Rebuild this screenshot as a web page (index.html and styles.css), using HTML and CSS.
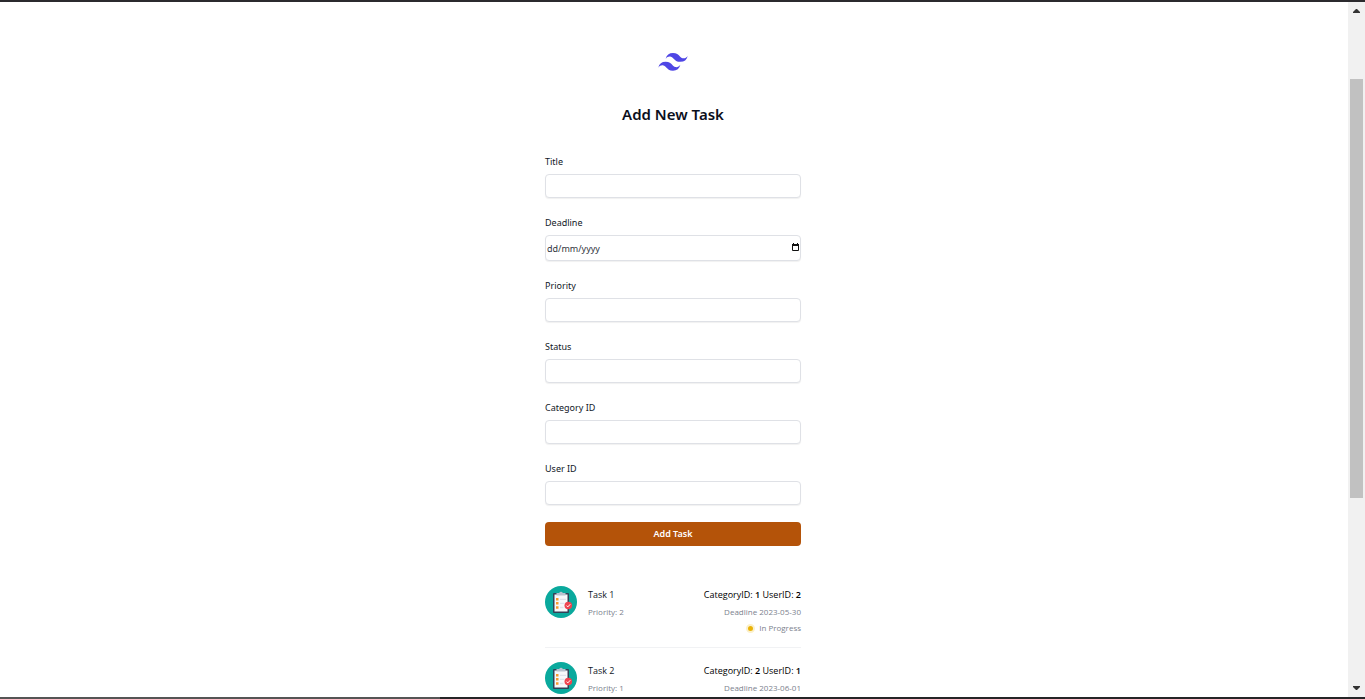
FILE: index.html
```
<!DOCTYPE html>
<html lang="en">
<head>
<meta charset="utf-8">
<title>Add New Task</title>
<link rel="stylesheet" href="styles.css">
</head>
<body>
<svg width="0" height="0" class="defs" aria-hidden="true">
  <symbol id="clipboard" viewBox="0 0 32 32">
    <circle cx="16" cy="16" r="16" fill="#0aa99d"/>
    <rect x="8" y="7" width="16" height="20" rx="1" fill="#324056"/>
    <rect x="9.500" y="8.500" width="13" height="17" fill="#f7f8fb"/>
    <path d="M11.500 9.500V7h2.700a1.900 1.900 0 0 1 3.600 0h2.700v2.500z" fill="#b9c3d0"/>
    <path d="M11 12h2.500v2.500H11zM11 16h2.500v2.500H11zM11 20.200h2.500v2.500H11z" fill="#f79a2e"/>
    <path d="M15 13.300h6M15 17.300h4.500M15 21.500h3.500" stroke="#dfe3ec" stroke-width="1.300"/>
    <circle cx="23.300" cy="19.500" r="3.800" fill="#ee4450"/>
    <path d="M21.500 19.600l1.300 1.300 2.500-2.700" fill="none" stroke="#fff" stroke-width="1"/>
  </symbol>
</svg>
<div class="top-edge"></div>
<div class="window">
  <main class="page">
    <div class="column">
      <svg class="logo" viewBox="0 0 54 33" role="img" aria-label="Logo"><path fill="#4f46e5" fill-rule="evenodd" d="M27 0c-7.200 0-11.700 3.600-13.500 10.800 2.700-3.600 5.850-4.950 9.450-4.050 2.054.513 3.522 2.004 5.147 3.653C30.744 13.090 33.808 16.200 40.500 16.200c7.200 0 11.700-3.600 13.500-10.800-2.700 3.600-5.850 4.950-9.450 4.050-2.054-.513-3.522-2.004-5.147-3.653C36.756 3.110 33.692 0 27 0zM13.500 16.200C6.300 16.200 1.800 19.800 0 27c2.700-3.600 5.850-4.950 9.450-4.050 2.054.514 3.522 2.004 5.147 3.653C17.244 29.290 20.308 32.400 27 32.400c7.200 0 11.700-3.600 13.500-10.800-2.700 3.600-5.850 4.950-9.450 4.050-2.054-.513-3.522-2.004-5.147-3.653C23.256 19.310 20.192 16.200 13.500 16.200z"/></svg>
      <h1 class="heading">Add New Task</h1>
      <form class="form">
        <div class="field"><label for="title">Title</label><input id="title" type="text"></div>
        <div class="field">
          <label for="deadline">Deadline</label>
          <div class="date-box">
            <input id="deadline" type="text" placeholder="dd/mm/yyyy">
            <button class="picker" type="button" aria-label="Choose date"><svg viewBox="0 0 8 9"><path d="M.5 2h6v5.500h-6z" fill="none" stroke="#111"/><path d="M0 1h7v2H0zM1 0h1v1H1zM5 0h1v1H5z" fill="#111"/></svg></button>
          </div>
        </div>
        <div class="field"><label for="priority">Priority</label><input id="priority" type="text"></div>
        <div class="field"><label for="status">Status</label><input id="status" type="text"></div>
        <div class="field"><label for="category">Category ID</label><input id="category" type="text"></div>
        <div class="field"><label for="user">User ID</label><input id="user" type="text"></div>
        <button class="submit" type="submit">Add Task</button>
      </form>
      <ul class="tasks">
        <li class="task">
          <svg class="avatar" aria-hidden="true"><use href="#clipboard"/></svg>
          <div class="info"><p class="name">Task 1</p><p class="meta">Priority: 2</p></div>
          <div class="details">
            <p class="ids">CategoryID: <b>1</b> UserID: <b>2</b></p>
            <p class="meta">Deadline 2023-05-30</p>
            <p class="meta progress"><span class="dot"></span>In Progress</p>
          </div>
        </li>
        <li class="task">
          <svg class="avatar" aria-hidden="true"><use href="#clipboard"/></svg>
          <div class="info"><p class="name">Task 2</p><p class="meta">Priority: 1</p></div>
          <div class="details">
            <p class="ids">CategoryID: <b>2</b> UserID: <b>1</b></p>
            <p class="meta">Deadline 2023-06-01</p>
          </div>
        </li>
      </ul>
    </div>
  </main>
  <div class="scrollbar" aria-hidden="true">
    <svg class="arrow" viewBox="0 0 7 4"><path d="M0 4V3l3-3h1l3 3v1z" fill="#333"/></svg>
    <div class="track"><div class="thumb"></div></div>
    <svg class="arrow" viewBox="0 0 7 4"><path d="M0 0v1l3 3h1l3-3V0z" fill="#333"/></svg>
  </div>
</div>
<div class="bottom-edge"></div>
</body>
</html>
```
FILE: styles.css
```
* { box-sizing: border-box; }
body {
  margin: 0;
  height: 100vh;
  display: flex;
  flex-direction: column;
  overflow: hidden;
  background: #fff;
  color: #111827;
  font: 9px/16px "Noto Sans", "Open Sans", sans-serif;
}
h1, p, ul { margin: 0; padding: 0; }
input, button { font: inherit; color: inherit; }
.defs { position: absolute; }
.top-edge { flex: none; height: 2px; background: #2b2a2e; }
.bottom-edge { flex: none; height: 2px; background: linear-gradient(90deg, #555 0 440px, #252527 440px); }
.window { flex: 1; min-height: 0; display: flex; }
.page { flex: 1; overflow: hidden; padding: 51px 2px 0 0; }
.column { width: 256px; margin: 0 auto; display: flex; flex-direction: column; }
.logo { width: 30px; height: 18px; align-self: center; }
.heading {
  margin-top: 31px;
  font: 600 15px/24px "Noto Sans", "Open Sans", sans-serif;
  text-align: center;
  color: #0b0f1c;
}
.form { margin-top: 28px; display: flex; flex-direction: column; gap: 17px; }
.field { display: flex; flex-direction: column; gap: 4px; }
.field input {
  width: 100%;
  height: 24px;
  padding: 0 1px;
  border: 1px solid #dfe1e6;
  border-radius: 4px;
  background: #fff;
  box-shadow: 0 1px 1px rgba(0, 0, 0, .06);
}
.date-box { position: relative; display: flex; }
.date-box input { height: 26px; }
.date-box input::placeholder { color: #30343d; opacity: 1; }
.picker {
  position: absolute;
  top: 8px;
  right: 1px;
  padding: 0;
  border: 0;
  background: none;
  display: flex;
}
.picker svg { width: 8px; height: 9px; }
.submit {
  height: 24px;
  padding: 0;
  border: 0;
  border-radius: 4px;
  background: #b45309;
  color: #fff;
  font-weight: 600;
}
.tasks {
  margin-top: 26px;
  list-style: none;
  font-family: "Open Sans", "Noto Sans", sans-serif;
}
.task {
  display: flex;
  gap: 11px;
  padding: 14px 0 11px;
  border-bottom: 1px solid #f1f2f4;
}
.avatar { width: 32px; height: 32px; flex: none; }
.info { flex: 1; }
.name, .ids { padding: 1px 0; }
.name { font-weight: 500; }
.ids { color: #000; }
.ids b { font-weight: 600; }
.details { text-align: right; }
.meta { font-size: 8px; color: #7b818d; }
.progress { display: flex; justify-content: flex-end; align-items: center; gap: 4px; }
.dot {
  width: 9px;
  height: 9px;
  border: 2px solid #fbf0cc;
  border-radius: 50%;
  background: #eab308;
}
.scrollbar {
  width: 17px;
  flex: none;
  padding: 7px 0;
  display: flex;
  flex-direction: column;
  align-items: center;
  background: #f1f1f1;
}
.arrow { width: 7px; height: 4px; }
.track { flex: 1; width: 13px; padding: 66px 0 0; }
.thumb { height: 69%; min-height: 20px; background: #c1c1c1; }
```
